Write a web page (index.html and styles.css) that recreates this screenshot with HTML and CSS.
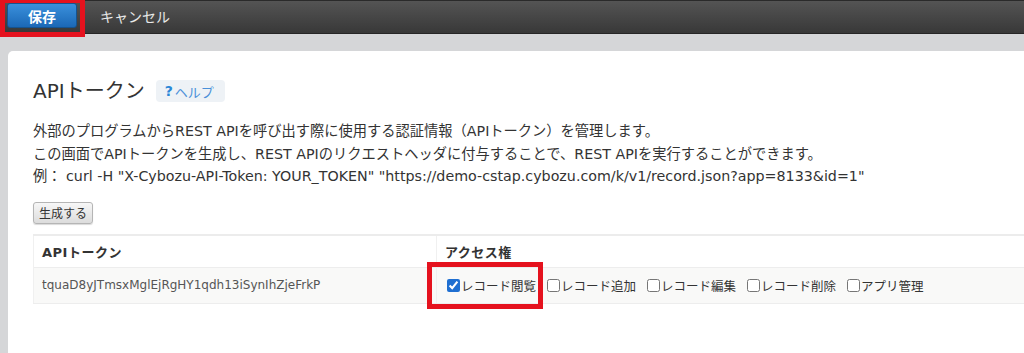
FILE: index.html
```html
<!DOCTYPE html>
<html lang="ja">
<head>
    <meta charset="UTF-8">
    <meta name="viewport" content="width=device-width, initial-scale=1.0">
    <title>APIトークン</title>
    <link rel="stylesheet" href="styles.css">
</head>
<body>
<header class="toolbar">
    <button type="button" class="save-button">保存</button>
    <a class="cancel-link" href="#">キャンセル</a>
</header>

<main class="main">
    <section class="panel">
        <div class="title-row">
            <h1>APIトークン</h1>
            <a class="help-badge" href="#"><span class="help-mark">?</span>ヘルプ</a>
        </div>

        <div class="description">
            <p>外部のプログラムからREST APIを呼び出す際に使用する認証情報（APIトークン）を管理します。</p>
            <p>この画面でAPIトークンを生成し、REST APIのリクエストヘッダに付与することで、REST APIを実行することができます。</p>
            <p>例： curl -H "X-Cybozu-API-Token: YOUR_TOKEN" "https://demo-cstap.cybozu.com/k/v1/record.json?app=8133&amp;id=1"</p>
        </div>

        <button type="button" class="generate-button">生成する</button>

        <table class="token-table">
            <thead>
                <tr>
                    <th class="col-token">APIトークン</th>
                    <th>アクセス権</th>
                </tr>
            </thead>
            <tbody>
                <tr>
                    <td class="token-value">tquaD8yJTmsxMglEjRgHY1qdh13iSynIhZjeFrkP</td>
                    <td>
                        <div class="permissions">
                            <label><input type="checkbox" checked>レコード閲覧</label>
                            <label><input type="checkbox">レコード追加</label>
                            <label><input type="checkbox">レコード編集</label>
                            <label><input type="checkbox">レコード削除</label>
                            <label><input type="checkbox">アプリ管理</label>
                        </div>
                    </td>
                </tr>
            </tbody>
        </table>
    </section>
</main>

<!-- annotation boxes -->
<div class="mark mark-save"></div>
<div class="mark mark-view"></div>
</body>
</html>
```

FILE: styles.css
```css
body {
    font-family: "DejaVu Sans", "Noto Sans CJK JP", sans-serif;
    margin: 0;
    padding: 0;
    background-color: #d5d6d8;
    color: #333;
    overflow: hidden;
    height: 353px;
}

.toolbar {
    height: 34px;
    box-sizing: border-box;
    display: flex;
    align-items: center;
    background: linear-gradient(#545454, #383838);
    border-top: 1px solid #2a2a2a;
    border-bottom: 1px solid #262626;
}

.save-button {
    margin-left: 7px;
    margin-top: -3px;
    width: 70px;
    height: 25px;
    font-family: "Noto Sans CJK JP", sans-serif;
    font-size: 14px;
    font-weight: bold;
    color: #fff;
    background: linear-gradient(#3a90dc, #1b68b6);
    border: 1px solid #15538f;
    border-radius: 3px;
}

.cancel-link {
    margin-left: 23px;
    margin-top: -3px;
    font-family: "Noto Sans CJK JP", sans-serif;
    font-size: 14px;
    color: #e8e8e8;
    text-decoration: none;
}

.main {
    padding: 17px 0 0 8px;
}

.panel {
    height: 302px;
    box-sizing: border-box;
    padding: 0 0 0 25px;
    background-color: #fff;
    border-top-left-radius: 5px;
    overflow: hidden;
}

.title-row {
    display: flex;
    align-items: center;
    gap: 11px;
    padding-top: 27px;
}

.title-row h1 {
    margin: 0;
    font-size: 20px;
    font-weight: normal;
    line-height: 26px;
    color: #333;
}

.help-badge {
    display: flex;
    align-items: center;
    height: 22px;
    padding: 0 11px 0 9px;
    font-family: "Noto Sans CJK JP", sans-serif;
    font-size: 13px;
    color: #4a90d9;
    text-decoration: none;
    background-color: #eef2f6;
    border-radius: 4px;
}

.help-mark {
    font-family: "DejaVu Sans", sans-serif;
    font-weight: bold;
    font-size: 14px;
    color: #2b86d6;
    margin-right: 2px;
}

.description {
    margin-top: 16px;
    font-size: 14.25px;
    line-height: 22.5px;
}

.description p {
    margin: 0;
}

.generate-button {
    display: block;
    margin-top: 14px;
    height: 22px;
    padding: 0 5px;
    font-family: "Noto Sans CJK JP", sans-serif;
    font-size: 12px;
    color: #333;
    background: linear-gradient(#f7f7f7, #dcdcdc);
    border: 1px solid #b5b5b5;
    border-radius: 3px;
    box-shadow: 0 1px 1px rgba(0, 0, 0, 0.15);
}

.token-table {
    margin-top: 10px;
    width: 100%;
    border-collapse: collapse;
}

.token-table th {
    height: 31px;
    padding: 0 8px;
    text-align: left;
    font-size: 13px;
    font-weight: bold;
    letter-spacing: 0.5px;
    background-color: #fff;
    border-top: 2px solid #ececec;
    border-left: 1px solid #f0f0f0;
}

.token-table .col-token {
    width: 386px;
}

.token-table td {
    height: 35px;
    padding: 0 8px;
    font-size: 12px;
    background-color: #f9f9f8;
    border-top: 1px solid #ededed;
    border-bottom: 1px solid #ededed;
    border-left: 1px solid #f0f0f0;
}

.token-value {
    color: #555;
}

.permissions {
    display: flex;
    gap: 11px;
    padding-left: 2px;
}

.permissions label {
    display: flex;
    align-items: center;
    font-family: "Noto Sans CJK JP", sans-serif;
    font-size: 12.5px;
    color: #333;
}

.permissions input {
    width: 13px;
    height: 13px;
    margin: 0 1px 0 0;
    accent-color: #1f6fd1;
}

.mark {
    position: absolute;
    box-sizing: border-box;
    border: 5px solid #e5121e;
}

.mark-save {
    left: 0;
    top: 0;
    width: 85px;
    height: 37px;
    border-top-width: 3px;
}

.mark-view {
    left: 427px;
    top: 262px;
    width: 116px;
    height: 47px;
}
```
